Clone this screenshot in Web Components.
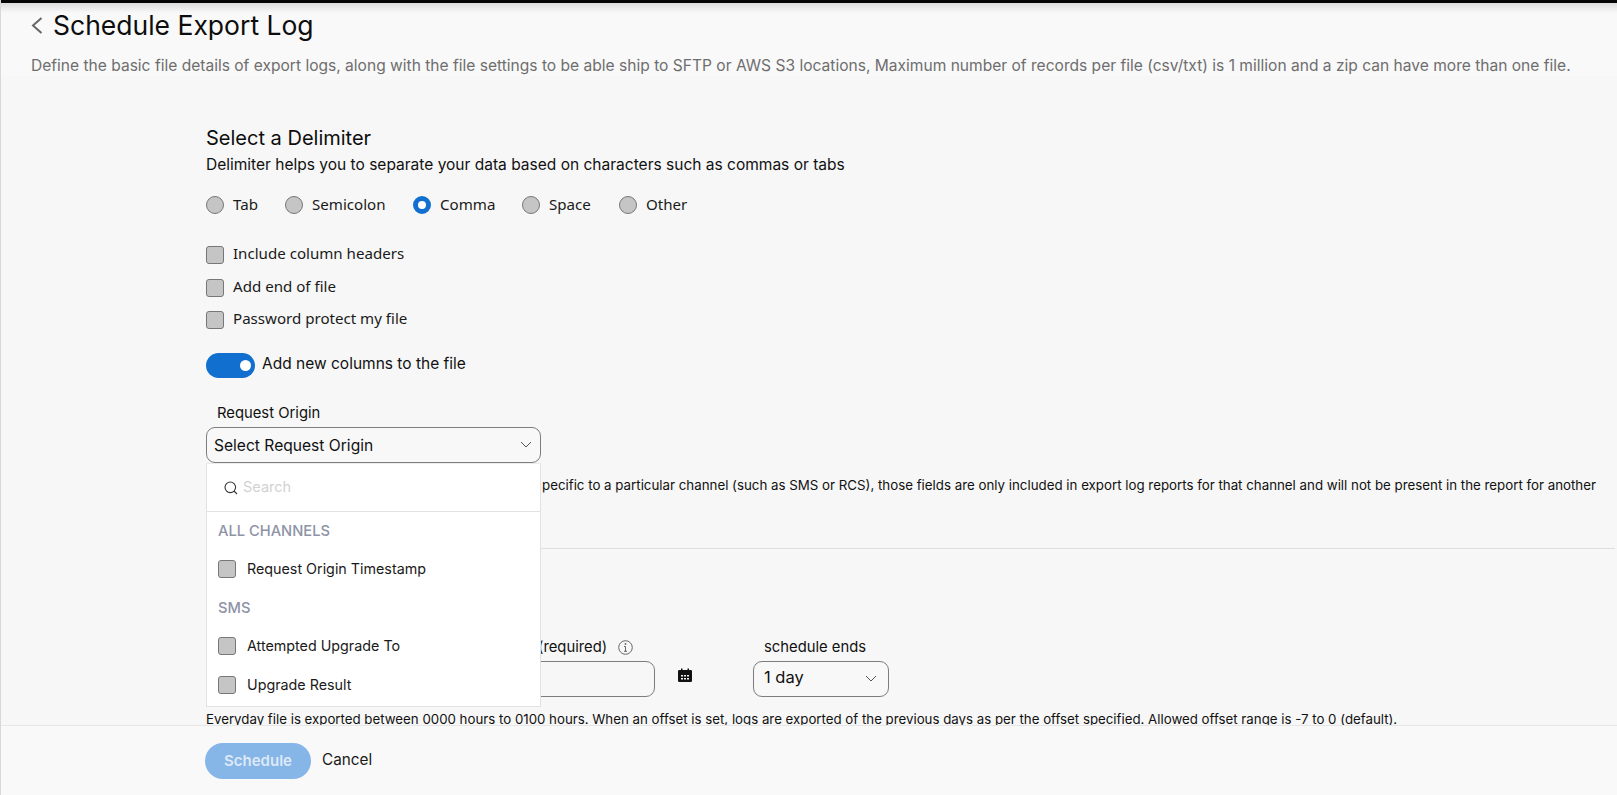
<!DOCTYPE html>
<html>

<head>
  <title>Schedule Export Log</title>
  <style>
    html, body {
      margin: 0;
      height: 100%;
      overflow: hidden;
      background: #f7f7f7;
      font-family: Inter, "Liberation Sans", Arial, sans-serif;
      color: #121212;
    }
  </style>
</head>

<body>

  <app-shell>
    <page-header slot="header" heading="Schedule Export Log">Define the basic file details of export logs, along with the file settings to be able ship to SFTP or AWS S3 locations, Maximum number of records per file (csv/txt) is 1 million and a zip can have more than one file.</page-header>
    <delimiter-form></delimiter-form>
    <form-footer slot="footer"></form-footer>
  </app-shell>

  <script>
    const plexStack = '"Noto Sans", "Liberation Sans", sans-serif'

    const chevronDown = `<svg width="12" height="7" viewBox="0 0 12 7" fill="none" stroke="#555" stroke-width="1"><path d="M1 1l5 5 5-5"/></svg>`

    class AppShell extends HTMLElement {
      constructor() {
        super()
        this.attachShadow({ mode: 'open' }).innerHTML = `
          <style>
            :host { display: flex; flex-direction: column; height: 100vh; position: relative; border-left: 1px solid #d8d8d8; box-sizing: border-box; }
            .bar { height: 3px; background: #050505; flex: none; }
            .head { flex: none; background: linear-gradient(#dcdcdc 0, #f9f9f9 10px); }
            .main { flex: 1; min-height: 0; overflow: hidden; }
            .foot { flex: none; }
          </style>
          <div class="bar"></div>
          <div class="head"><slot name="header"></slot></div>
          <div class="main"><slot></slot></div>
          <div class="foot"><slot name="footer"></slot></div>`
      }
    }
    customElements.define('app-shell', AppShell)

    class PageHeader extends HTMLElement {
      constructor() {
        super()
        this.attachShadow({ mode: 'open' }).innerHTML = `
          <style>
            :host { display: block; padding-left: 30px; }
            .title { display: flex; align-items: center; gap: 10px; height: 44px; }
            h1 { margin: 0; font-size: 26.5px; font-weight: 400; color: #0d0d0d; }
            p { margin: 9px 0 0; font-size: 15.57px; line-height: 20px; color: #6e6e6e; white-space: nowrap; }
          </style>
          <div class="title">
            <svg width="12" height="17" viewBox="0 0 12 17" fill="none" stroke="#666" stroke-width="2"><path d="M10.500 1L2 8.500l8.500 7.500"/></svg>
            <h1>${this.getAttribute('heading')}</h1>
          </div>
          <p><slot></slot></p>`
      }
    }
    customElements.define('page-header', PageHeader)

    class RadioOption extends HTMLElement {
      constructor() {
        super()
        this.attachShadow({ mode: 'open' }).innerHTML = `
          <style>
            :host { display: inline-flex; align-items: center; gap: 9px; height: 18px; font-family: ${plexStack}; font-size: 15.1px; color: #1a1a1a; }
            i { width: 18px; height: 18px; box-sizing: border-box; border-radius: 50%; background: #c5c5c5; border: 1px solid #777; flex: none; }
            :host([checked]) i { background: #fff; border: 5px solid #1170cf; }
            span { margin-top: -2px; }
          </style>
          <i></i><span><slot></slot></span>`
      }
    }
    customElements.define('radio-option', RadioOption)

    class CheckOption extends HTMLElement {
      constructor() {
        super()
        this.attachShadow({ mode: 'open' }).innerHTML = `
          <style>
            :host { display: flex; align-items: center; gap: var(--check-gap, 9px); height: 18px; font-family: ${plexStack}; font-size: 15.1px; color: #1a1a1a; }
            i { width: 18px; height: 18px; box-sizing: border-box; border-radius: 3px; background: #c5c5c5; border: 1px solid #777; flex: none; }
            span { margin-top: var(--check-shift, -5px); }
          </style>
          <i></i><span><slot></slot></span>`
      }
    }
    customElements.define('check-option', CheckOption)

    class ToggleSwitch extends HTMLElement {
      constructor() {
        super()
        this.attachShadow({ mode: 'open' }).innerHTML = `
          <style>
            :host { display: flex; align-items: center; gap: 7px; height: 25px; font-size: 15.5px; color: #111; }
            .track { width: 49px; height: 25px; border-radius: 13px; background: #1170cf; display: flex; align-items: center; justify-content: flex-end; padding-right: 3px; box-sizing: border-box; }
            .knob { width: 11px; height: 11px; border-radius: 50%; background: #fff; margin-right: 1px; }
            span { margin-top: -4px; }
          </style>
          <div class="track"><div class="knob"></div></div><span><slot></slot></span>`
      }
    }
    customElements.define('toggle-switch', ToggleSwitch)

    class SelectBox extends HTMLElement {
      constructor() {
        super()
        this.attachShadow({ mode: 'open' }).innerHTML = `
          <style>
            :host { display: flex; align-items: center; justify-content: space-between; height: 36px; box-sizing: border-box; border: 1px solid #7d7d7d; border-radius: 9px; padding: 0 8px 0 7px; font-size: 15.6px; color: #111; background: #f8f8f8; }
            span { white-space: nowrap; margin-top: var(--select-shift, 0); }
            svg { margin-bottom: 2px; }
          </style>
          <span><slot></slot></span>${chevronDown}`
      }
    }
    customElements.define('select-box', SelectBox)

    class OriginDropdown extends HTMLElement {
      constructor() {
        super()
        this.attachShadow({ mode: 'open' }).innerHTML = `
          <style>
            :host { display: block; position: absolute; left: 0; right: 0; top: 36px; z-index: 10; height: 244px; box-sizing: border-box; background: #fff; border: 1px solid #e2e2e2; border-top-color: #ececec; }
            .search { height: 47px; border-bottom: 1px solid #e2e2e2; display: flex; align-items: center; gap: 5px; padding-left: 17px; color: #d2d2d2; font-size: 14.5px; }
            .search span { margin-top: -2px; }
            h4 { margin: 0; padding-left: 11px; font-size: 14.7px; line-height: 20px; font-weight: 500; color: #8e93a6; }
            h4.first { margin-top: 9px; }
            h4.second { margin-top: 20px; }
            check-option { margin-left: 11px; font-family: Inter, sans-serif; font-size: 14.3px; --check-gap: 11px; --check-shift: -2px; }
            .a { margin-top: 19px; }
            .b { margin-top: 19px; }
            .c { margin-top: 21px; }
          </style>
          <div class="search">
            <svg width="14" height="14" viewBox="0 0 14 14" fill="none" stroke="#333" stroke-width="1.1"><circle cx="6.300" cy="6.300" r="5.300"/><path d="M10 10l3 3"/></svg>
            <span>Search</span>
          </div>
          <h4 class="first">ALL CHANNELS</h4>
          <check-option class="a">Request Origin Timestamp</check-option>
          <h4 class="second">SMS</h4>
          <check-option class="b">Attempted Upgrade To</check-option>
          <check-option class="c">Upgrade Result</check-option>`
      }
    }
    customElements.define('origin-dropdown', OriginDropdown)

    class DelimiterForm extends HTMLElement {
      constructor() {
        super()
        this.attachShadow({ mode: 'open' }).innerHTML = `
          <style>
            :host { display: block; padding-left: 205px; padding-right: 2px; font-size: 14px; color: #111; }
            h2 { margin: 50px 0 0; font-size: 20px; line-height: 24px; font-weight: 400; color: #0d0d0d; }
            .lead { margin: 5px 0 0; font-size: 15.52px; line-height: 20px; }
            .radios { display: flex; margin-top: 21px; }
            .radios radio-option:nth-child(1) { width: 79px; }
            .radios radio-option:nth-child(2) { width: 128px; }
            .radios radio-option:nth-child(3) { width: 109px; }
            .radios radio-option:nth-child(4) { width: 97px; }
            .checks { display: flex; flex-direction: column; margin-top: 32px; gap: 15px; }
            .checks check-option:last-child { margin-top: -1px; }
            toggle-switch { margin-top: 24px; }
            .origin-label { margin: 25px 0 0; padding-left: 11px; font-size: 14.8px; line-height: 20px; }
            .origin { position: relative; width: 335px; margin-top: 4px; }
            .note { margin: 12px 0 0; padding-left: 336px; font-size: 13.3px; line-height: 20px; height: 40px; white-space: nowrap; }
            hr { margin: 33px 0 0; border: 0; border-top: 1px solid #dedede; }
            .field-labels { display: flex; margin-top: 88px; line-height: 20px; font-size: 14.8px; align-items: center; }
            .offset-label { width: 558px; box-sizing: border-box; display: flex; align-items: center; gap: 11px; padding-left: 332px; }
            .fields { display: flex; margin-top: 4px; align-items: flex-start; }
            .input { width: 449px; height: 36px; box-sizing: border-box; border: 1px solid #7d7d7d; border-radius: 9px; }
            .cal { margin: 7px 61px 0 23px; }
            .fields select-box { width: 136px; padding: 0 11px 0 10px; font-size: 16.5px; --select-shift: -4px; }
            .hint { margin: 12px 0 0; font-size: 13.28px; line-height: 20px; white-space: nowrap; }
          </style>
          <h2>Select a Delimiter</h2>
          <p class="lead">Delimiter helps you to separate your data based on characters such as commas or tabs</p>
          <div class="radios">
            <radio-option>Tab</radio-option>
            <radio-option>Semicolon</radio-option>
            <radio-option checked>Comma</radio-option>
            <radio-option>Space</radio-option>
            <radio-option>Other</radio-option>
          </div>
          <div class="checks">
            <check-option>Include column headers</check-option>
            <check-option>Add end of file</check-option>
            <check-option>Password protect my file</check-option>
          </div>
          <toggle-switch>Add new columns to the file</toggle-switch>
          <p class="origin-label">Request Origin</p>
          <div class="origin">
            <select-box>Select Request Origin</select-box>
            <origin-dropdown></origin-dropdown>
          </div>
          <p class="note">pecific to a particular channel (such as SMS or RCS), those fields are only included in export log reports for that channel and will not be present in the report for another</p>
          <hr>
          <div class="field-labels">
            <div class="offset-label">
              <span>(required)</span>
              <svg width="15" height="15" viewBox="0 0 15 15" fill="none" stroke="#666" stroke-width="1"><circle cx="7.500" cy="7.500" r="6.800"/><path d="M7.500 6.500v4.800M6 6.500h1.500M6 11.300h3"/><circle cx="7.500" cy="4" r="0.900" fill="#666" stroke="none"/></svg>
            </div>
            <span>schedule ends</span>
          </div>
          <div class="fields">
            <div class="input"></div>
            <svg class="cal" width="14" height="14" viewBox="0 0 14 14" fill="#111"><path d="M0 3.200a1.200 1.200 0 0 1 1.200-1.200H3V.5h1.500V2h5V.5H11V2h1.800A1.200 1.200 0 0 1 14 3.200V5H0zM0 5h14v7.800a1.200 1.200 0 0 1-1.200 1.200H1.200A1.200 1.200 0 0 1 0 12.800zM3 7v1.500h2V7zM6 7v1.500h2V7zM9 7v1.500h2V7zM3 10v1.500h2V10zM6 10v1.500h2V10zM9 10v1.500h2V10z" fill-rule="evenodd"/></svg>
            <select-box>1 day</select-box>
          </div>
          <p class="hint">Everyday file is exported between 0000 hours to 0100 hours. When an offset is set, logs are exported of the previous days as per the offset specified. Allowed offset range is -7 to 0 (default).</p>`
      }
    }
    customElements.define('delimiter-form', DelimiterForm)

    class FormFooter extends HTMLElement {
      constructor() {
        super()
        this.attachShadow({ mode: 'open' }).innerHTML = `
          <style>
            :host { display: flex; align-items: center; gap: 11px; height: 70px; box-sizing: border-box; border-top: 1px solid #e6e6e6; background: #f9f9f9; padding: 0 0 0 204px; position: relative; z-index: 5; }
            .primary { width: 106px; height: 36px; border-radius: 18px; background: #86b5e7; color: #dde9f7; font-size: 15px; font-weight: 600; display: flex; align-items: center; justify-content: center; }
            .cancel { font-size: 15.3px; color: #1a1a1a; margin-bottom: 3px; }
          </style>
          <div class="primary">Schedule</div>
          <div class="cancel">Cancel</div>`
      }
    }
    customElements.define('form-footer', FormFooter)
  </script>

</body>

</html>
